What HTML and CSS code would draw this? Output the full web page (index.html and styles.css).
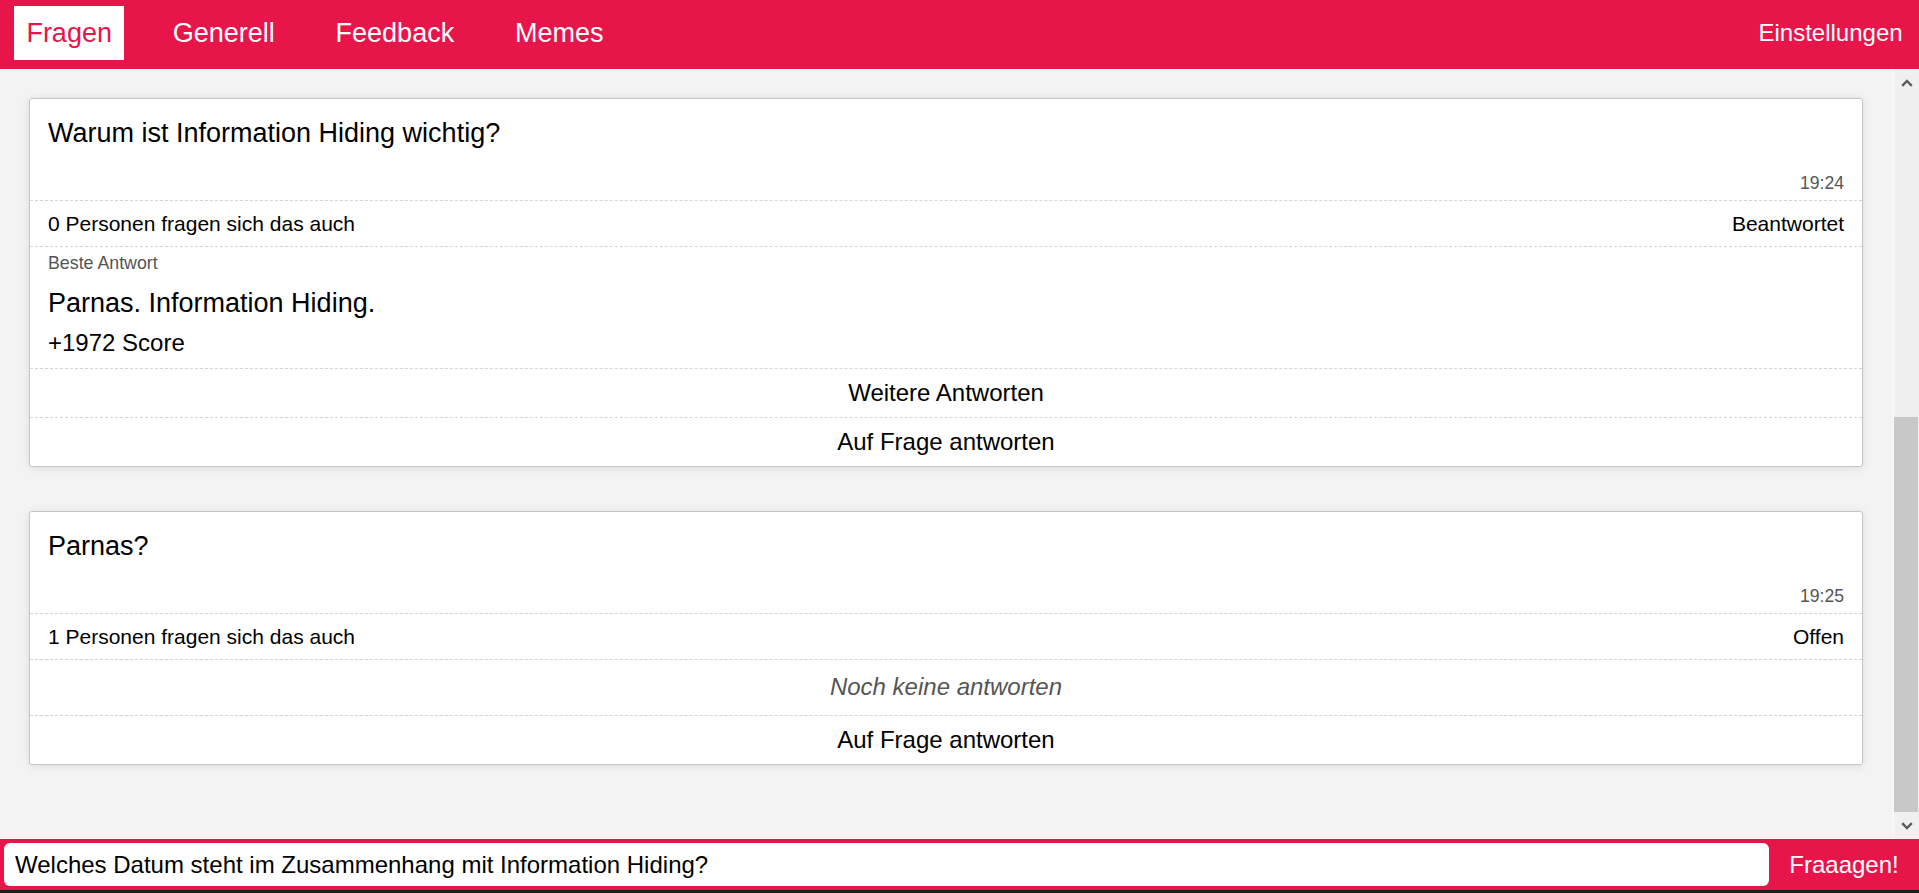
FILE: index.html
```html
<!DOCTYPE html>
<html lang="de">
<head>
<meta charset="utf-8">
<title>Fragen</title>
<link rel="stylesheet" href="styles.css">
</head>
<body>
<div class="app">
  <header class="topbar">
    <nav class="tabs">
      <a class="tab active">Fragen</a>
      <a class="tab">Generell</a>
      <a class="tab">Feedback</a>
      <a class="tab">Memes</a>
    </nav>
    <a class="tab settings">Einstellungen</a>
  </header>

  <div class="main">
    <section class="feed">
      <article class="card">
        <div class="q-head">
          <h2 class="q-title">Warum ist Information Hiding wichtig?</h2>
          <div class="q-time">19:24</div>
        </div>
        <div class="q-meta"><span>0 Personen fragen sich das auch</span><span>Beantwortet</span></div>
        <div class="best">
          <div class="best-label">Beste Antwort</div>
          <div class="best-text">Parnas. Information Hiding.</div>
          <div class="best-score">+1972 Score</div>
        </div>
        <div class="q-action">Weitere Antworten</div>
        <div class="q-action">Auf Frage antworten</div>
      </article>

      <article class="card">
        <div class="q-head">
          <h2 class="q-title">Parnas?</h2>
          <div class="q-time">19:25</div>
        </div>
        <div class="q-meta"><span>1 Personen fragen sich das auch</span><span>Offen</span></div>
        <div class="q-empty">Noch keine antworten</div>
        <div class="q-action">Auf Frage antworten</div>
      </article>
    </section>

    <div class="scrollbar">
      <div class="sb-btn">
        <svg width="12" height="8" viewBox="0 0 12 8"><polyline points="1.2,6.8 6,2 10.8,6.8" fill="none" stroke="#5c5c5c" stroke-width="2.4"/></svg>
      </div>
      <div class="sb-track"><div class="sb-thumb"></div></div>
      <div class="sb-btn">
        <svg width="12" height="8" viewBox="0 0 12 8"><polyline points="1.2,1.2 6,6 10.8,1.2" fill="none" stroke="#5c5c5c" stroke-width="2.4"/></svg>
      </div>
    </div>
  </div>

  <footer class="askbar">
    <input class="ask-input" type="text" value="Welches Datum steht im Zusammenhang mit Information Hiding?">
    <button class="ask-btn">Fraaagen!</button>
  </footer>
</div>
</body>
</html>
```

FILE: styles.css
```css
* {
  box-sizing: border-box;
}

html, body {
  margin: 0;
  padding: 0;
  height: 100%;
}

body {
  font-family: "Liberation Sans", Arial, sans-serif;
  color: #000;
  background: #f3f3f3;
  overflow: hidden;
}

.app {
  height: 100vh;
  display: flex;
  flex-direction: column;
}

/* ---------- top bar ---------- */
.topbar {
  height: 69px;
  flex: 0 0 69px;
  background: #e8154b;
  display: flex;
  justify-content: space-between;
  align-items: flex-start;
  padding: 6px 4px 0 14px;
}

.tabs {
  display: flex;
  gap: 36px;
}

.tab {
  height: 54px;
  display: flex;
  align-items: center;
  padding: 0 12.4px;
  color: #fff;
  font-size: 27px;
  text-decoration: none;
  cursor: pointer;
}

.tab.active {
  background: #fff;
  color: #e8154b;
}

.tab.settings {
  font-size: 24px;
}

/* ---------- main ---------- */
.main {
  flex: 1;
  min-height: 0;
  display: flex;
}

.feed {
  flex: 1;
  min-width: 0;
  overflow: hidden;
  padding: 29px 30px 0 29px;
  display: flex;
  flex-direction: column;
  gap: 44px;
}

.card {
  background: #fff;
  border: 1px solid #c6c6c6;
  border-radius: 3px;
  box-shadow: 0 1px 9px rgba(0, 0, 0, 0.10);
}

.q-head {
  padding: 19px 18px 7px;
}

.q-title {
  margin: 0 0 24px;
  font-size: 27px;
  font-weight: normal;
  line-height: 31px;
}

.q-time {
  text-align: right;
  font-size: 17.6px;
  line-height: 20px;
  color: #555;
}

.q-meta {
  display: flex;
  justify-content: space-between;
  padding: 10px 18px;
  font-size: 21px;
  line-height: 25px;
  border-top: 1px dashed #d4d4d4;
}

.best {
  padding: 6px 18px 11px;
  border-top: 1px dashed #d4d4d4;
}

.best-label {
  font-size: 17.8px;
  line-height: 21px;
  color: #555;
}

.best-text {
  margin-top: 14px;
  font-size: 27px;
  line-height: 31px;
}

.best-score {
  margin-top: 10px;
  font-size: 24px;
  line-height: 28px;
}

.q-action {
  padding: 10px 18px;
  text-align: center;
  font-size: 24px;
  line-height: 28px;
  border-top: 1px dashed #d4d4d4;
  cursor: pointer;
}

.q-empty {
  padding: 13px 18px 14px;
  text-align: center;
  font-size: 24px;
  line-height: 28px;
  font-style: italic;
  color: #555;
  border-top: 1px dashed #d4d4d4;
}

/* ---------- scrollbar ---------- */
.scrollbar {
  flex: 0 0 26px;
  display: flex;
  flex-direction: column;
  background: #f0f0f0;
  border-left: 1px solid #fafafa;
}

.sb-btn {
  height: 27px;
  flex: 0 0 27px;
  display: flex;
  align-items: center;
  justify-content: center;
}

.sb-track {
  flex: 1;
  display: flex;
  flex-direction: column;
  justify-content: flex-end;
}

.sb-thumb {
  height: 395px;
  margin-right: 1px;
  background: #c8c8c8;
}

/* ---------- ask bar ---------- */
.askbar {
  flex: 0 0 54px;
  height: 54px;
  background: #e8154b;
  display: flex;
  align-items: center;
  padding: 0 0 0 4px;
  border-bottom: 3px solid #1e1e1e;
}

.ask-input {
  flex: 1;
  min-width: 0;
  height: 43px;
  border: none;
  border-radius: 6px;
  background: #fff;
  padding: 0 11px;
  font-family: "Liberation Sans", Arial, sans-serif;
  font-size: 24px;
  color: #000;
  outline: none;
}

.ask-btn {
  flex: 0 0 150px;
  width: 150px;
  height: 43px;
  border: none;
  background: transparent;
  color: #fff;
  font-family: "Liberation Sans", Arial, sans-serif;
  font-size: 24px;
  padding: 0;
  cursor: pointer;
}
```
